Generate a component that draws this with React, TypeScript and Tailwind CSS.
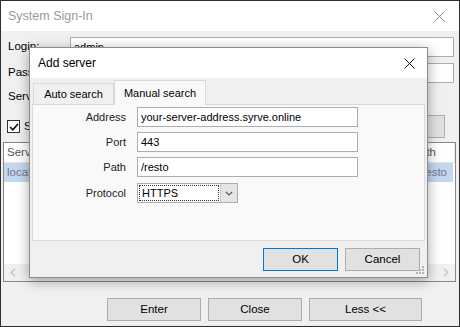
import React from 'react';

const field = 'h-[20px] bg-white border border-[#abadb3] flex items-center px-[3px] text-[11px] text-black';
const btn = 'h-[23px] bg-[#e1e1e1] border border-[#adadad] flex items-center justify-center text-[11.5px] text-black';

const CloseIcon: React.FC<{ color: string }> = ({ color }) => (
  <svg width="11" height="11" viewBox="0 0 11 11" fill="none" stroke={color} strokeWidth={1}>
    <path d="M0.5 0.5l10 10M10.5 0.5l-10 10" />
  </svg>
);

const FormRow: React.FC<{ label: string; children: React.ReactNode }> = ({ label, children }) => (
  <div className="flex items-center h-[20px]">
    <span className="w-[93px] text-right text-[11px] text-[#222]">{label}</span>
    <div className="ml-[11px] w-[221px]">{children}</div>
  </div>
);

const AddServerDialog: React.FC = () => (
  <div className="absolute left-[28px] top-[46px] w-[399px] h-[231px] border border-[#8c8c8c] bg-[#f0f0f0] shadow-[0_3px_12px_rgba(0,0,0,0.35)] flex flex-col">
    <div className="h-[30px] bg-white flex items-center justify-between pl-[8px] pr-[12px] shrink-0">
      <span className="text-[12px] text-black">Add server</span>
      <CloseIcon color="#111" />
    </div>

    {/* tabs */}
    <div className="flex items-end h-[26px] pl-[3px] pt-[2px]">
      <div className="h-[21px] w-[81px] flex items-center justify-center border border-b-0 border-[#d9d9d9] bg-[#f0f0f0] text-[11px] text-black">
        Auto search
      </div>
      <div className="relative z-10 -mb-px h-[25px] w-[92px] flex items-center justify-center border border-b-0 border-[#d9d9d9] bg-[#f9f9f9] text-[11px] text-black">
        Manual search
      </div>
    </div>
    <div className="mx-[2px] h-[137px] border border-[#d9d9d9] bg-[#f9f9f9] pt-[2px] flex flex-col gap-[5px]">
      <FormRow label="Address">
        <div className={field}>your-server-address.syrve.online</div>
      </FormRow>
      <FormRow label="Port">
        <div className={field}>443</div>
      </FormRow>
      <FormRow label="Path">
        <div className={field}>/resto</div>
      </FormRow>
      <div className="mt-[1px]">
        <FormRow label="Protocol">
          <div className="w-[101px] h-[20px] flex border border-[#abadb3] bg-white">
            <div className="flex-1 m-[1px] border border-dotted border-[#333] flex items-center px-[2px] text-[11px] text-black">
              HTTPS
            </div>
            <div className="w-[17px] bg-[#e5e5e5] border-l border-[#c8c8c8] flex items-center justify-center">
              <svg width="8" height="5" viewBox="0 0 8 5" fill="none" stroke="#555" strokeWidth={1.2}>
                <path d="M0.8 0.8L4 4L7.2 0.8" />
              </svg>
            </div>
          </div>
        </FormRow>
      </div>
    </div>

    <div className="flex justify-end gap-[7px] pr-[7px] mt-[7px]">
      <div className={`${btn} w-[75px] !border-[#0078d7]`}>OK</div>
      <div className={`${btn} w-[75px]`}>Cancel</div>
    </div>

    {/* size grip */}
    <svg className="absolute right-[2px] bottom-[2px]" width="10" height="10" viewBox="0 0 10 10" fill="#b5b5b5">
      <rect x="7" y="1" width="2" height="2" />
      <rect x="4" y="4" width="2" height="2" />
      <rect x="7" y="4" width="2" height="2" />
      <rect x="1" y="7" width="2" height="2" />
      <rect x="4" y="7" width="2" height="2" />
      <rect x="7" y="7" width="2" height="2" />
    </svg>
  </div>
);

export default function App() {
  return (
    <div className="relative w-[460px] h-[327px] border border-[#2e2e2e] bg-[#f0f0f0] overflow-hidden font-['Liberation_Sans',Arial,sans-serif]">
      <div className="h-[30px] bg-white flex items-center justify-between pl-[7px] pr-[14px]">
        <span className="text-[12.5px] text-[#9a9a9a]">System Sign-In</span>
        <CloseIcon color="#8a8a8a" />
      </div>

      <div className="flex items-center h-[20px] mt-[6px] pl-[7px] pr-[5px]">
        <span className="w-[62px] text-[11.5px] text-black">Login:</span>
        <div className={`${field} flex-1`}>admin</div>
      </div>
      <div className="flex items-center h-[20px] mt-[6px] pl-[7px] pr-[5px]">
        <span className="w-[62px] text-[11.5px] text-black">Pass</span>
        <div className={`${field} flex-1`}></div>
      </div>
      <div className="flex items-center h-[20px] mt-[4px] pl-[7px] pr-[40px]">
        <span className="w-[62px] text-[11.5px] text-black">Serv</span>
        <div className={`${field} flex-1`}></div>
      </div>
      <div className="flex items-center justify-between h-[23px] mt-[8px] pl-[6px] pr-[14px]">
        <div className="flex items-center gap-[4px]">
          <div className="w-[13px] h-[13px] border border-[#333] bg-white flex items-center justify-center">
            <svg width="10" height="8" viewBox="0 0 10 8" fill="none" stroke="#111" strokeWidth={1.6}>
              <path d="M1 4l2.8 2.8L9 1" />
            </svg>
          </div>
          <span className="text-[11.5px] text-black">S</span>
        </div>
        <div className={`${btn} w-[120px]`}></div>
      </div>

      <div className="mt-[4px] ml-[2px] mr-[3px] h-[140px] border border-[#828790] bg-white flex flex-col">
        <div className="flex h-[20px] border-b border-[#e5e5e5] text-[11.5px] text-[#555]">
          <div className="w-[120px] flex items-center pl-[3px] border-r border-[#e5e5e5]">Serv</div>
          <div className="flex-1 flex items-center pl-[4px] border-r border-[#e5e5e5]"></div>
          <div className="w-[46px] flex items-center justify-end pr-[18px] border-r border-[#e5e5e5]">th</div>
        </div>
        <div className="flex h-[19px] bg-[#c4d7ec] mr-[2px] text-[11.5px] text-[#6a7b90]">
          <div className="w-[120px] flex items-center pl-[3px]">local</div>
          <div className="flex-1" />
          <div className="w-[40px] flex items-center justify-end pr-[6px]">esto</div>
        </div>
        <div className="flex-1" />
        <div className="h-[17px] bg-[#f0f0f0] flex items-center justify-between px-[6px]">
          <svg width="6" height="9" viewBox="0 0 6 9" fill="none" stroke="#c2c2c2" strokeWidth={1.3}>
            <path d="M5 0.8L1.2 4.5L5 8.2" />
          </svg>
          <svg width="6" height="9" viewBox="0 0 6 9" fill="none" stroke="#c2c2c2" strokeWidth={1.3}>
            <path d="M1 0.8L4.8 4.5L1 8.2" />
          </svg>
        </div>
      </div>

      <div className="flex gap-[7px] mt-[16px] pl-[106px]">
        <div className={`${btn} w-[94px]`}>Enter</div>
        <div className={`${btn} w-[94px]`}>Close</div>
        <div className={`${btn} w-[113px]`}>Less &lt;&lt;</div>
      </div>

      <AddServerDialog />
    </div>
  );
}
